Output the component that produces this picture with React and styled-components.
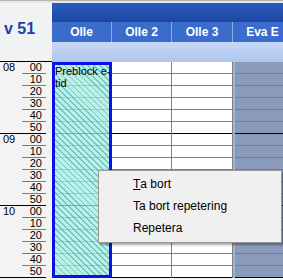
import React from "react";
import styled, { createGlobalStyle } from "styled-components";

const GlobalStyle = createGlobalStyle`
  html, body {
    margin: 0;
    padding: 0;
    overflow: hidden;
    background: #f0f0f0;
  }
  body {
    font-family: "Liberation Sans", Arial, sans-serif;
  }
`;

const Page = styled.div`
  position: relative;
  width: 283px;
  height: 280px;
  overflow: hidden;
  background: #f3f3f3;
`;

const TopStrip = styled.div`
  height: 2px;
  border-top: 1px solid #b4b4b4;
  background: #e6e6e6;
`;

const Header = styled.div`
  display: flex;
  height: 59px;
`;

const WeekCell = styled.div`
  width: 52px;
  flex-shrink: 0;
  display: flex;
  align-items: center;
  padding: 0 0 8px 4px;
  box-sizing: border-box;
  background: #f1f2f4;
  color: #2340a8;
  font-weight: bold;
  font-size: 16px;
`;

const HeaderRight = styled.div`
  flex: 1;
  display: flex;
  flex-direction: column;
  min-width: 0;
`;

const DarkBand = styled.div`
  height: 19px;
  background: linear-gradient(#2a5bbf, #1c46a4);
`;

const NameRow = styled.div`
  display: flex;
  height: 20px;
  background: #3a6ccb;
`;

const NameCell = styled.div`
  width: ${(p) => p.w}px;
  flex-shrink: 0;
  box-sizing: border-box;
  border-right: 1px solid #8fabe0;
  color: #fff;
  font-weight: bold;
  font-size: 12px;
  display: flex;
  align-items: center;
  justify-content: center;
  white-space: nowrap;
`;

const LightBand = styled.div`
  height: 20px;
  background: linear-gradient(#c9d9f6, #aec5ee);
`;

const Body = styled.div`
  display: flex;
`;

const TimeColumn = styled.div`
  width: 52px;
  flex-shrink: 0;
  border-top: 1px solid #000;
  margin-top: -1px;
`;

const TimeRow = styled.div`
  display: flex;
  height: 12px;
  box-sizing: border-box;
  border-bottom: 1px solid ${(p) => (p.hourEnd ? "#000" : "transparent")};
  margin-right: 6px;
  font-size: 11px;
  line-height: 11px;
  color: #000;
`;

const HourLabel = styled.div`
  width: 22px;
  padding-left: 3px;
  box-sizing: border-box;
`;

const MinuteLabel = styled.div`
  flex: 1;
  text-align: right;
  padding-right: 4px;
  border-bottom: ${(p) => (p.hourEnd ? "none" : "1px solid #7a7a7a")};
  margin-bottom: ${(p) => (p.hourEnd ? "0" : "-1px")};
`;

const Columns = styled.div`
  display: flex;
  flex: 1;
  min-width: 0;
`;

const Column = styled.div`
  position: relative;
  width: ${(p) => p.w}px;
  flex-shrink: 0;
  box-sizing: border-box;
  border-left: ${(p) => (p.off ? "2px solid #a2b0d0" : "none")};
  border-right: 1px solid ${(p) => (p.off ? "#7d8cae" : "#808080")};
  background: ${(p) => (p.off ? "#8a9aba" : "#fff")};
`;

const Slot = styled.div`
  height: 12px;
  box-sizing: border-box;
  border-bottom: 1px solid
    ${(p) => (p.hourEnd ? "#000" : p.off ? "#6d7c9c" : "#808080")};
`;

const Booking = styled.div`
  position: absolute;
  left: 0;
  top: 0;
  width: 60px;
  height: 216px;
  box-sizing: border-box;
  border: 3px solid #0a12e6;
  background-color: rgba(160, 236, 224, 0.75);
  background-image: repeating-linear-gradient(
    45deg,
    transparent 0px,
    transparent 3px,
    rgba(70, 160, 160, 0.55) 3px,
    rgba(70, 160, 160, 0.55) 4.2px
  );
  font-size: 11px;
  line-height: 12px;
  margin-top: 0;
  color: #000;
  white-space: nowrap;
`;

const Menu = styled.div`
  position: absolute;
  left: 98px;
  top: 170px;
  width: 184px;
  padding: 2px 0 3px;
  box-sizing: border-box;
  background: #f0f0f0;
  border: 1px solid #979797;
  box-shadow: 2px 2px 2px rgba(0, 0, 0, 0.35);
`;

const MenuItem = styled.div`
  height: 22px;
  display: flex;
  align-items: center;
  padding-left: 34px;
  font-size: 12px;
  color: #000;
  white-space: nowrap;
`;

const Accel = styled.span`
  text-decoration: underline;
`;

const columns = [
  { name: "Olle", w: 60 },
  { name: "Olle 2", w: 60 },
  { name: "Olle 3", w: 61 },
  { name: "Eva E", w: 60, off: true },
];

const hours = ["08", "09", "10"];
const minutes = ["00", "10", "20", "30", "40", "50"];

export default function App() {
  const slots = [];
  hours.forEach((h) => minutes.forEach((m, i) => slots.push({ h, m, i })));

  return (
    <>
      <GlobalStyle />
      <Page>
        <TopStrip />
        <Header>
          <WeekCell>v 51</WeekCell>
          <HeaderRight>
            <DarkBand />
            <NameRow>
              {columns.map((c) => (
                <NameCell key={c.name} w={c.w}>
                  {c.name}
                </NameCell>
              ))}
            </NameRow>
            <LightBand />
          </HeaderRight>
        </Header>
        <Body>
          <TimeColumn>
            {slots.map((s) => (
              <TimeRow key={s.h + s.m} hourEnd={s.i === 5}>
                <HourLabel>{s.i === 0 ? s.h : ""}</HourLabel>
                <MinuteLabel hourEnd={s.i === 5}>{s.m}</MinuteLabel>
              </TimeRow>
            ))}
          </TimeColumn>
          <Columns>
            {columns.map((c, ci) => (
              <Column key={c.name} w={c.w} off={c.off}>
                {slots.map((s) => (
                  <Slot key={s.h + s.m} hourEnd={s.i === 5} off={c.off} />
                ))}
                {ci === 0 && (
                  <Booking>
                    Preblock e-
                    <br />
                    tid
                  </Booking>
                )}
              </Column>
            ))}
          </Columns>
        </Body>
        <Menu>
          <MenuItem>
            <Accel>T</Accel>a bort
          </MenuItem>
          <MenuItem>Ta bort repetering</MenuItem>
          <MenuItem>Repetera</MenuItem>
        </Menu>
      </Page>
    </>
  );
}
